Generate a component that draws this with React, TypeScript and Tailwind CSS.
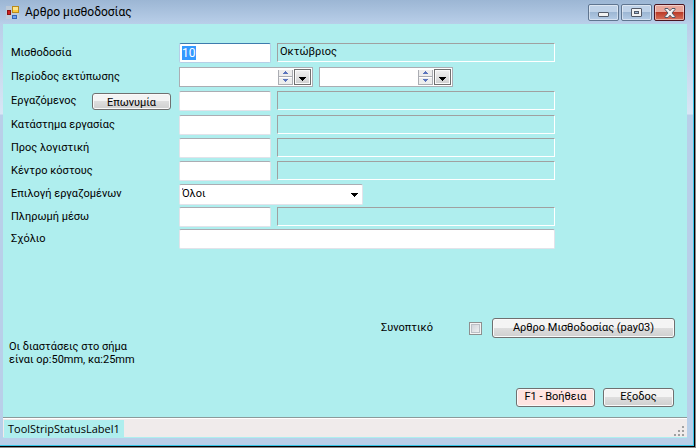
import { useEffect, useRef } from "react";
import type { InputHTMLAttributes, ReactNode } from "react";
import clsx from "clsx";

const buttonStyle =
    "rounded-[3px] border border-[#707070] bg-linear-to-b from-[#f4f4f4] from-50% via-[#dedede] via-50% to-[#cfcfcf] shadow-[inset_0_0_0_1px_#fafafa]";

const TextBox = ({
    className,
    ...props
}: InputHTMLAttributes<HTMLInputElement>) => (
    <input
        type="text"
        className={clsx(
            "h-5 rounded-[2px] border border-[#e2e3ea] border-t-[#abadb3] bg-white px-0.5 outline-none",
            className
        )}
        {...props}
    />
);

const Description = ({ children }: { children?: ReactNode }) => (
    <output className="ml-1.5 h-[19px] grow border border-t-[#a0a0a0] border-l-[#a0a0a0] border-r-white border-b-white pl-0.5 leading-4">
        {children}
    </output>
);

type RowProps = {
    id: string;
    label: string;
    className: string;
    extra?: ReactNode;
    children: ReactNode;
};

const Row = ({ id, label, className, extra, children }: RowProps) => (
    <div className={clsx("flex items-start", className)}>
        <div className="flex h-5 w-[168px] shrink-0 items-center justify-between pr-2">
            <label htmlFor={id}>{label}</label>
            {extra}
        </div>
        {children}
    </div>
);

const spinButton =
    "flex h-[7px] w-full items-center justify-center border-b border-[#abadb3] bg-[#ededed]";

const PeriodPicker = ({ id, label }: { id: string; label: string }) => (
    <div className="mr-1.5 flex h-5 w-[134px] items-center border border-[#abadb3] bg-white pr-px">
        <input
            id={id}
            type="text"
            aria-label={label}
            className="h-4 w-0 min-w-0 grow px-0.5 outline-none"
        />
        <div className="mr-px flex h-[15px] w-[15px] shrink-0 flex-col justify-between border-x border-[#abadb3]">
            <button type="button" aria-label="Αύξηση" className={spinButton}>
                <svg width="5" height="3" viewBox="0 0 5 3" shapeRendering="crispEdges">
                    <path d="M2 0h1v1h1v1h1v1H0V2h1V1h1z" fill="#5a74bd" />
                </svg>
            </button>
            <button type="button" aria-label="Μείωση" className={spinButton}>
                <svg width="5" height="3" viewBox="0 0 5 3" shapeRendering="crispEdges">
                    <path d="M0 0h5v1H4v1H3v1H2V2H1V1H0z" fill="#5a74bd" />
                </svg>
            </button>
        </div>
        <button
            type="button"
            aria-label="Ημερολόγιο"
            className="flex h-4 w-[17px] shrink-0 items-center justify-center border border-[#707070] bg-linear-to-b from-[#f2f2f2] to-[#cfcfcf] pt-1 shadow-[inset_0_0_0_1px_#fafafa]"
        >
            <svg width="7" height="4" viewBox="0 0 7 4" shapeRendering="crispEdges" className="shrink-0">
                <path d="M0 0h7v1H6v1H5v1H4v1H3V3H2V2H1V1H0z" />
            </svg>
        </button>
    </div>
);

const windowButton =
    "flex h-[17px] w-[31px] items-center justify-center rounded-[2px] border shadow-[inset_0_0_0_1px_rgba(255,255,255,0.45)]";

const blueButton =
    "border-[#5f7590] bg-linear-to-b from-[#bfd2e8] from-50% via-[#9db7d4] via-50% to-[#b5cce6]";

const TitleBar = () => (
    <header className="flex h-6 items-start justify-between bg-linear-to-b from-[#9cb6d4] to-[#b9cfe9] pr-2 pl-1.5">
        <div className="flex items-center gap-1.5 pt-1 font-['Roboto','Noto_Sans',sans-serif] text-[12px] leading-[17px]">
            <svg width="13" height="13" viewBox="0 0 13 13">
                <rect width="13" height="13" fill="#d4d4d4" fillOpacity="0.5" />
                <rect x="1.5" y="4.5" width="3" height="4" fill="#d02020" stroke="#8a1414" />
                <rect x="6.5" y="0.5" width="6" height="6" fill="#fbc93d" stroke="#b98a1a" />
                <rect x="7" y="1" width="5" height="3" fill="#fde58d" />
                <rect x="6.5" y="9.5" width="4" height="3" fill="#6fa0f0" stroke="#3366b8" />
            </svg>
            <h1>Αρθρο μισθοδοσίας</h1>
        </div>
        <div className="flex gap-0.5 pt-1">
            <button
                type="button"
                aria-label="Ελαχιστοποίηση"
                className={clsx(windowButton, blueButton)}
            >
                <svg width="11" height="5" viewBox="0 0 11 5" className="mt-1">
                    <rect x="0.5" y="0.5" width="10" height="4" rx="0.5" fill="#f3f3f3" stroke="#535a68" />
                </svg>
            </button>
            <button
                type="button"
                aria-label="Μεγιστοποίηση"
                className={clsx(windowButton, blueButton)}
            >
                <svg width="11" height="9" viewBox="0 0 11 9">
                    <rect x="0.5" y="0.5" width="10" height="8" rx="0.5" fill="#f3f3f3" stroke="#535a68" />
                    <rect x="3.5" y="3.5" width="4" height="2" fill="#9db7d4" stroke="#535a68" />
                </svg>
            </button>
            <button
                type="button"
                aria-label="Κλείσιμο"
                className={clsx(
                    windowButton,
                    "border-[#4a1420] bg-linear-to-b from-[#e8a79b] from-50% via-[#bb3b28] via-50% to-[#d8705a]"
                )}
            >
                <svg width="12" height="10" viewBox="0 0 12 10">
                    <path
                        d="M1 0.5h3L6 2.8 8 0.5h3v1L8 5l3 3.5v1H8L6 7.2 4 9.5H1v-1L4 5 1 1.5z"
                        fill="#f3f3f3"
                        stroke="#535a68"
                    />
                </svg>
            </button>
        </div>
    </header>
);

const App = () => {
    const payrollRef = useRef<HTMLInputElement>(null);

    useEffect(() => {
        payrollRef.current?.focus();
        payrollRef.current?.select();
    }, []);

    return (
        <div className="flex min-h-screen border-r border-b border-[#8d8d8d] bg-black pr-px pb-px font-['Roboto','Noto_Sans',sans-serif] text-[11px] text-black">
            <div className="flex grow flex-col border-r border-b border-[#35c5e8] bg-[#b9cfe9]">
                <TitleBar />
                <div className="flex grow flex-col bg-linear-to-b from-[#b9cfe9] from-0% via-[#d9e6f5] via-[90px] to-[#b9cfe9] to-[91px] pr-1.5 pb-[7px] pl-[3px]">
                    <form
                        className="flex grow flex-col bg-[#afeeee]"
                        onSubmit={(e) => e.preventDefault()}
                    >
                        <div className="pt-[19px] pr-[132px] pl-2">
                            <Row id="payroll" label="Μισθοδοσία" className="h-6">
                                <input
                                    id="payroll"
                                    ref={payrollRef}
                                    type="text"
                                    defaultValue="10"
                                    className="h-5 w-[92px] rounded-[2px] border border-[#b5cfe7] border-t-[#3d7bad] bg-white px-0.5 text-[12px] outline-none selection:bg-[#3399ff] selection:text-white"
                                />
                                <Description>Οκτώβριος</Description>
                            </Row>
                            <Row id="periodFrom" label="Περίοδος εκτύπωσης" className="h-6">
                                <PeriodPicker id="periodFrom" label="Περίοδος εκτύπωσης από" />
                                <PeriodPicker id="periodTo" label="Περίοδος εκτύπωσης έως" />
                            </Row>
                            <Row
                                id="employee"
                                label="Εργαζόμενος"
                                className="h-6"
                                extra={
                                    <button
                                        type="button"
                                        className={clsx(buttonStyle, "h-[17px] w-[79px] overflow-hidden leading-[18px]")}
                                    >
                                        Επωνυμία
                                    </button>
                                }
                            >
                                <TextBox id="employee" className="w-[92px]" />
                                <Description />
                            </Row>
                            <Row id="branch" label="Κατάστημα εργασίας" className="h-[23px]">
                                <TextBox id="branch" className="w-[92px]" />
                                <Description />
                            </Row>
                            <Row id="accounting" label="Προς λογιστική" className="h-[23px]">
                                <TextBox id="accounting" className="w-[92px]" />
                                <Description />
                            </Row>
                            <Row id="costCenter" label="Κέντρο κόστους" className="h-[23px]">
                                <TextBox id="costCenter" className="w-[92px]" />
                                <Description />
                            </Row>
                            <Row id="selection" label="Επιλογή εργαζομένων" className="h-[23px]">
                                <div className="relative w-[184px]">
                                    <select
                                        id="selection"
                                        className="h-[21px] w-full appearance-none rounded-[2px] border border-[#e2e3ea] border-t-[#abadb3] bg-white px-0.5 outline-none"
                                    >
                                        <option>Όλοι</option>
                                    </select>
                                    <svg
                                        width="7"
                                        height="4"
                                        viewBox="0 0 7 4"
                                        shapeRendering="crispEdges"
                                        className="pointer-events-none absolute top-[9px] right-[5px]"
                                    >
                                        <path d="M0 0h7v1H6v1H5v1H4v1H3V3H2V2H1V1H0z" />
                                    </svg>
                                </div>
                            </Row>
                            <Row id="payment" label="Πληρωμή μέσω" className="h-[22px]">
                                <TextBox id="payment" className="w-[92px]" />
                                <Description />
                            </Row>
                            <Row id="comment" label="Σχόλιο" className="h-5">
                                <TextBox id="comment" className="min-w-0 grow" />
                            </Row>
                        </div>

                        <div className="mt-auto flex justify-between pr-3 pb-[10px] pl-1.5">
                            <p className="pt-[22px] leading-[13px]">
                                Οι διαστάσεις στο σήμα
                                <br />
                                είναι ορ:50mm, κα:25mm
                            </p>
                            <div className="flex flex-col items-end gap-[50px]">
                                <div className="flex items-center">
                                    <label htmlFor="summary" className="mr-9">
                                        Συνοπτικό
                                    </label>
                                    <input
                                        id="summary"
                                        type="checkbox"
                                        className="mr-2.5 size-[13px] appearance-none border border-[#8e8f8f] bg-linear-to-br from-[#cbcfd5] to-[#f6f6f6] shadow-[inset_0_0_0_1px_#f4f4f4,inset_0_0_0_2px_#bcc0c6]"
                                    />
                                    <button type="submit" className={clsx(buttonStyle, "h-5 w-[183px]")}>
                                        Αρθρο Μισθοδοσίας (pay03)
                                    </button>
                                </div>
                                <div className="flex gap-2 pr-px">
                                    <button
                                        type="button"
                                        className="h-[19px] w-[79px] rounded-[3px] border border-[#707070] bg-[#ffe4e1] shadow-[inset_0_0_0_1px_#fafafa]"
                                    >
                                        F1 - Βοήθεια
                                    </button>
                                    <button type="button" className={clsx(buttonStyle, "h-[19px] w-[71px]")}>
                                        Εξοδος
                                    </button>
                                </div>
                            </div>
                        </div>

                        <footer className="flex h-[21px] items-stretch justify-between border-t border-b border-t-[#8c9a9a] border-b-[#afeeee] bg-[#f0ebeb] shadow-[inset_0_1px_0_#ffffff]">
                            <span className="mt-0.5 ml-px bg-[#afeeee] px-1 font-['Open_Sans','Noto_Sans',sans-serif] leading-[17px]">
                                ToolStripStatusLabel1
                            </span>
                            <svg width="11" height="11" viewBox="0 0 11 11" fill="#a0a0a0" className="mt-2 mr-0.5">
                                <path d="M8 0h2v2H8zM4 4h2v2H4zM8 4h2v2H8zM0 8h2v2H0zM4 8h2v2H4zM8 8h2v2H8z" />
                            </svg>
                        </footer>
                    </form>
                </div>
            </div>
        </div>
    );
};

export default App;
